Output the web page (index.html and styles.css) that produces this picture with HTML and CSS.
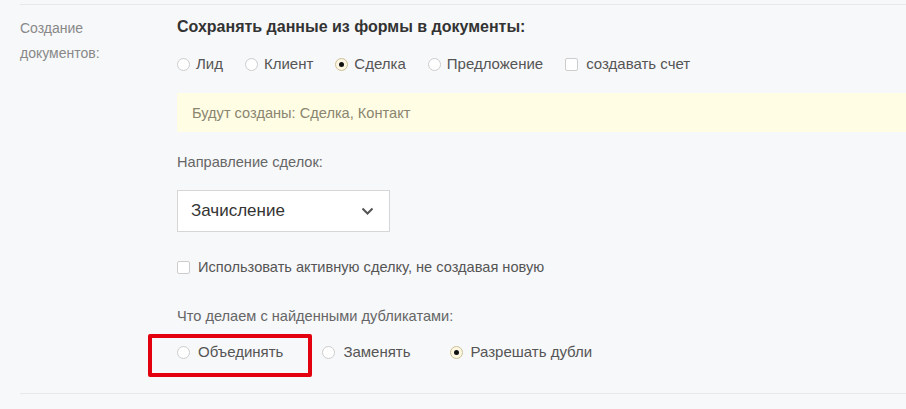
FILE: index.html
```
<!DOCTYPE html>
<html lang="ru">
<head>
  <meta charset="UTF-8">
  <meta name="viewport" content="width=device-width, initial-scale=1.0">
  <title>Создание документов</title>
  <link rel="stylesheet" href="styles.css">
</head>
<body>
  <div class="page">
    <div class="section">
      <div class="side-label">Создание<br>документов:</div>
      <div class="content">
        <h3>Сохранять данные из формы в документы:</h3>
        <div class="options">
          <label class="opt"><span class="radio"></span>Лид</label>
          <label class="opt"><span class="radio"></span>Клиент</label>
          <label class="opt"><span class="radio checked"></span>Сделка</label>
          <label class="opt"><span class="radio"></span>Предложение</label>
          <label class="opt"><span class="check"></span>создавать счет</label>
        </div>
        <div class="notice">Будут созданы: Сделка, Контакт</div>

        <div class="field-title">Направление сделок:</div>
        <div class="select">
          <span>Зачисление</span>
          <svg class="chevron" width="13" height="8" viewBox="0 0 13 8">
            <path d="M1.5 1.5 L6.5 6.5 L11.5 1.5" fill="none" stroke="#555" stroke-width="2"/>
          </svg>
        </div>

        <label class="opt single"><span class="check"></span>Использовать активную сделку, не создавая новую</label>

        <div class="field-title dup-title">Что делаем с найденными дубликатами:</div>
        <div class="options dup">
          <label class="opt"><span class="radio"></span>Объединять</label>
          <label class="opt"><span class="radio"></span>Заменять</label>
          <label class="opt"><span class="radio checked"></span>Разрешать дубли</label>
          <div class="highlight"></div>
        </div>
      </div>
    </div>
  </div>
</body>
</html>
```

FILE: styles.css
```
body {
  margin: 0;
  background: #f7f8fa;
  font-family: "Liberation Sans", Arial, sans-serif;
  color: #555;
}
.page {
  padding: 4px 0 0 20px;
}
.section {
  display: grid;
  grid-template-columns: 157px 1fr;
  border-top: 1px solid #e6e8eb;
  border-bottom: 1px solid #e6e8eb;
  padding: 11px 0 31px;
}
.side-label {
  font-size: 14px;
  line-height: 25px;
  color: #888;
}
h3 {
  margin: 0;
  font-size: 16px;
  line-height: 22px;
  color: #333;
}
.options {
  display: flex;
  align-items: center;
  margin-top: 16px;
  height: 20px;
}
.opt {
  display: flex;
  align-items: center;
  font-size: 15px;
  line-height: 20px;
  color: #555;
  margin-right: 22px;
}
.radio, .check {
  width: 13px;
  height: 13px;
  box-sizing: border-box;
  border: 1px solid #cdcdcd;
  background: #fff;
  margin-right: 6px;
  flex-shrink: 0;
}
.radio {
  border-radius: 50%;
  position: relative;
}
.radio.checked {
  border-color: #cdbf94;
  background: #fcf6e2;
}
.radio.checked::after {
  content: "";
  position: absolute;
  left: 3px;
  top: 3px;
  width: 5px;
  height: 5px;
  border-radius: 50%;
  background: #111;
}
.check {
  border-radius: 2px;
  margin-right: 8px;
}
.notice {
  margin-top: 19px;
  height: 39px;
  background: #fffde3;
  display: flex;
  align-items: center;
  padding-left: 15px;
  font-size: 14.6px;
  color: #8a8570;
}
.field-title {
  margin-top: 20px;
  font-size: 14.6px;
  line-height: 20px;
  color: #666;
}
.select {
  margin-top: 18px;
  width: 213px;
  height: 42px;
  box-sizing: border-box;
  background: #fff;
  border: 1px solid #d6d6d6;
  display: flex;
  align-items: center;
  justify-content: space-between;
  padding: 0 15px 0 13px;
  font-size: 17px;
  color: #333;
}
.opt.single {
  margin-top: 25px;
  height: 20px;
  font-size: 14.6px;
}
.dup-title {
  margin-top: 29px;
}
.options.dup {
  position: relative;
}
.dup .opt {
  margin-right: 39px;
}
.dup .radio {
  margin-right: 8px;
}
.highlight {
  position: absolute;
  left: -29px;
  top: -8px;
  width: 164px;
  height: 43px;
  box-sizing: border-box;
  border: 4px solid #e3000f;
  border-radius: 2px;
}
```
